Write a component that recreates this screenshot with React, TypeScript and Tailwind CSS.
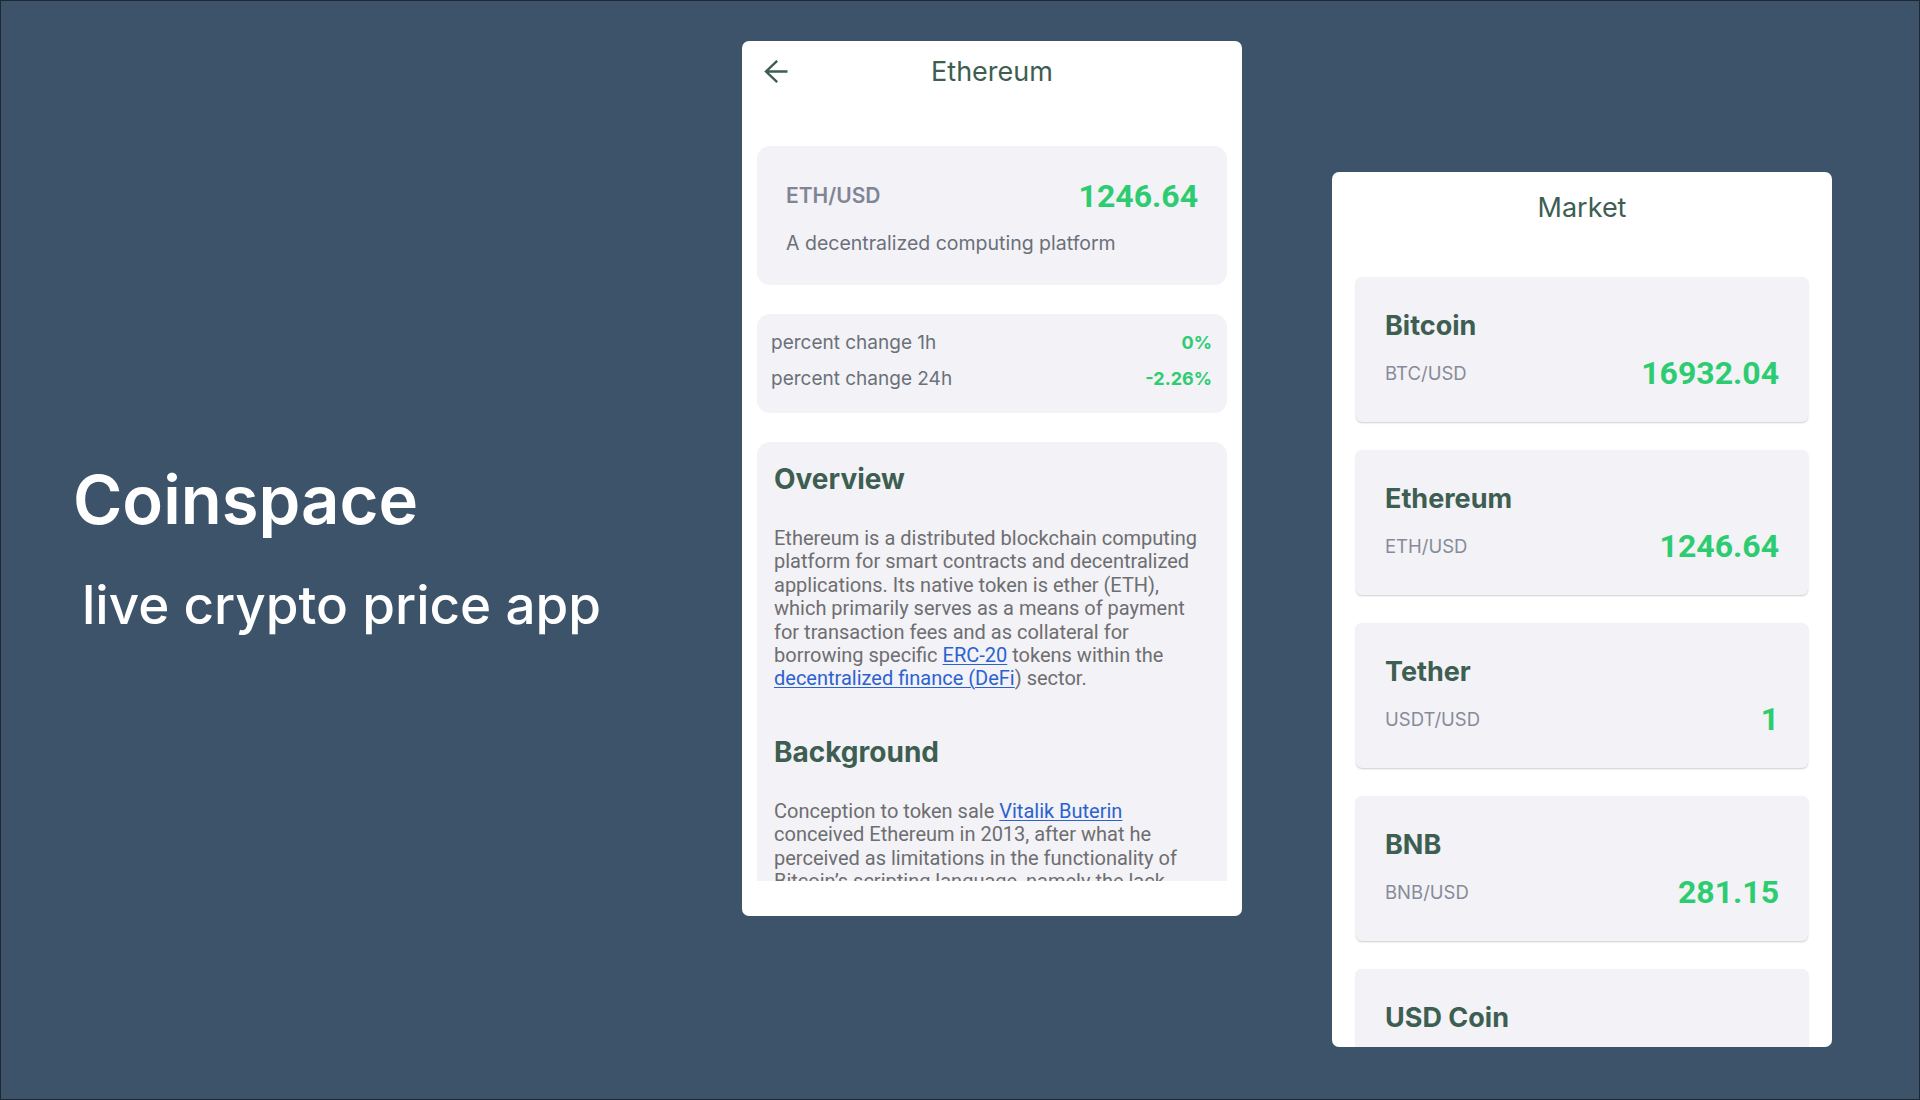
import React from "react";

const coins = [
  { name: "Bitcoin", pair: "BTC/USD", price: "16932.04" },
  { name: "Ethereum", pair: "ETH/USD", price: "1246.64" },
  { name: "Tether", pair: "USDT/USD", price: "1" },
  { name: "BNB", pair: "BNB/USD", price: "281.15" },
  { name: "USD Coin", pair: "USDC/USD", price: "1" },
];

function BackArrow() {
  return (
    <svg width="24" height="24" viewBox="0 0 24 24" fill="none">
      <path
        d="M23.5 11.5H2 M13.2 0.8 2 11.5 13.2 22.2"
        stroke="#3d5e50"
        strokeWidth="2.4"
      />
    </svg>
  );
}

const link = "text-[#2c62cf] underline decoration-1 underline-offset-2";

function PhoneDetail() {
  return (
    <div className="mt-[40px] w-[500px] h-[875px] bg-white rounded-[7px] flex flex-col overflow-hidden shrink-0">
      <div className="h-[61px] grid grid-cols-[1fr_auto_1fr] items-center shrink-0">
        <div className="pl-[22px] flex items-center">
          <BackArrow />
        </div>
        <div className="text-[27px] leading-none text-[#3d5e50]">Ethereum</div>
        <div />
      </div>
      <div className="h-[779px] overflow-hidden shrink-0 px-[15px]">
        <div className="mt-[44px] h-[139px] rounded-[13px] bg-[#f2f2f7] px-[29px] pt-[33px]">
          <div className="flex items-center justify-between h-[33px]">
            <span className="text-[21px] leading-none font-semibold text-[#7f8594]">ETH/USD</span>
            <span className="font-['Roboto',sans-serif] text-[32px] leading-none font-bold text-[#2ecc71]">
              1246.64
            </span>
          </div>
          <div className="mt-[22px] text-[19.5px] leading-none text-[#6b7079]">
            A decentralized computing platform
          </div>
        </div>
        <div className="mt-[29px] h-[99px] rounded-[13px] bg-[#f2f2f7] pl-[14px] pr-[15px] pt-[11px] text-[19px] leading-[36px]">
          <div className="flex justify-between">
            <span className="text-[#6b7079]">percent change 1h</span>
            <span className="font-bold text-[#2ecc71] text-[18px]">0%</span>
          </div>
          <div className="flex justify-between">
            <span className="text-[#6b7079]">percent change 24h</span>
            <span className="font-bold text-[#2ecc71] text-[18px]">-2.26%</span>
          </div>
        </div>
        <div className="mt-[29px] rounded-[13px] bg-[#f2f2f7] px-[17px] pt-[23px] pb-[40px]">
          <h2 className="text-[28px] leading-none font-bold text-[#3d5e50]">Overview</h2>
          <p className="mt-[34px] font-['Roboto',sans-serif] text-[20px] leading-[23.4px] text-[#6e6e70] whitespace-nowrap">
            Ethereum is a distributed blockchain computing
            <br />
            platform for smart contracts and decentralized
            <br />
            applications. Its native token is ether (ETH),
            <br />
            which primarily serves as a means of payment
            <br />
            for transaction fees and as collateral for
            <br />
            borrowing specific <span className={link}>ERC-20</span> tokens within the
            <br />
            <span className={link}>decentralized finance (DeFi</span>) sector.
          </p>
          <h2 className="mt-[47px] text-[28px] leading-none font-bold text-[#3d5e50]">Background</h2>
          <p className="mt-[34px] font-['Roboto',sans-serif] text-[20px] leading-[23.4px] text-[#6e6e70] whitespace-nowrap">
            Conception to token sale <span className={link}>Vitalik Buterin</span>
            <br />
            conceived Ethereum in 2013, after what he
            <br />
            perceived as limitations in the functionality of
            <br />
            Bitcoin’s scripting language, namely the lack
            <br />
            of Turing completeness. He proposed a
          </p>
        </div>
      </div>
      <div className="h-[35px] shrink-0" />
    </div>
  );
}

function Market() {
  return (
    <div className="ml-[90px] mt-[171px] w-[500px] h-[875px] bg-white rounded-[7px] overflow-hidden shrink-0 flex flex-col">
      <div className="h-[70px] flex items-center justify-center shrink-0">
        <span className="text-[27px] leading-none text-[#3d5e50]">Market</span>
      </div>
      <div className="mt-[35px] px-[24px] flex flex-col gap-[28px]">
        {coins.map((c) => (
          <div
            key={c.name}
            className="h-[145px] shrink-0 rounded-[6px] bg-[#f2f2f7] shadow-[0_1px_2px_rgba(0,0,0,0.2)] px-[29px] pt-[35px]"
          >
            <div className="text-[27px] leading-none font-bold text-[#3d5e50]">{c.name}</div>
            <div className="mt-[18px] h-[32px] flex items-center justify-between">
              <span className="text-[18.5px] leading-none text-[#878b98]">{c.pair}</span>
              <span className="font-['Roboto',sans-serif] text-[32px] leading-none font-bold text-[#2ecc71]">
                {c.price}
              </span>
            </div>
          </div>
        ))}
      </div>
    </div>
  );
}

export default function App() {
  return (
    <div className="w-[1920px] h-[1100px] box-border border border-[#1d2935] bg-[#3c536a] flex items-start overflow-hidden font-['Inter',sans-serif]">
      <div className="w-[741px] shrink-0 pl-[72px] pt-[465px] text-white">
        <div className="text-[67px] leading-none font-semibold">Coinspace</div>
        <div className="ml-[9px] mt-[46px] text-[53px] leading-none font-medium">live crypto price app</div>
      </div>
      <PhoneDetail />
      <Market />
    </div>
  );
}
